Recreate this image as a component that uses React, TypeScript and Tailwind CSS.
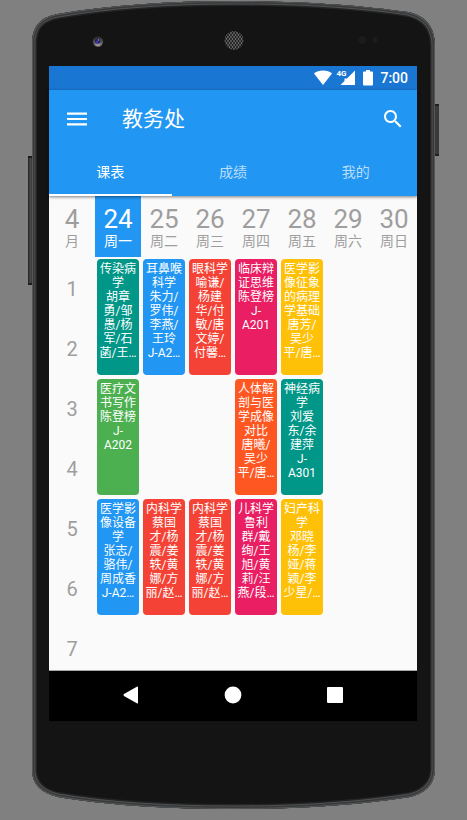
import React, { useState } from "react";

type Lesson = { color: string; lines: string[] };

const TEAL = "bg-[#009688]";
const BLUE = "bg-[#2196f3]";
const RED = "bg-[#f44336]";
const PINK = "bg-[#e91e63]";
const AMBER = "bg-[#ffc107]";
const GREEN = "bg-[#4caf50]";
const ORANGE = "bg-[#ff5722]";

const tabs = ["课表", "成绩", "我的"];

const days = [
  { date: "24", name: "周一" },
  { date: "25", name: "周二" },
  { date: "26", name: "周三" },
  { date: "27", name: "周四" },
  { date: "28", name: "周五" },
  { date: "29", name: "周六" },
  { date: "30", name: "周日" },
];

// One entry for each double period, one slot for each weekday.
const blocks: (Lesson | null)[][] = [
  [
    { color: TEAL, lines: ["传染病", "学", "胡章", "勇/邹", "愚/杨", "军/石", "菡/王…"] },
    { color: BLUE, lines: ["耳鼻喉", "科学", "朱力/", "罗伟/", "李燕/", "王玲", "J-A2…"] },
    { color: RED, lines: ["眼科学", "喻谦/", "杨建", "华/付", "敏/唐", "文婷/", "付馨…"] },
    { color: PINK, lines: ["临床辩", "证思维", "陈登榜", "J-", "A201"] },
    { color: AMBER, lines: ["医学影", "像征象", "的病理", "学基础", "唐芳/", "吴少", "平/唐…"] },
    null,
    null,
  ],
  [
    { color: GREEN, lines: ["医疗文", "书写作", "陈登榜", "J-", "A202"] },
    null,
    null,
    { color: ORANGE, lines: ["人体解", "剖与医", "学成像", "对比", "唐曦/", "吴少", "平/唐…"] },
    { color: TEAL, lines: ["神经病", "学", "刘爱", "东/余", "建萍", "J-", "A301"] },
    null,
    null,
  ],
  [
    { color: BLUE, lines: ["医学影", "像设备", "学", "张志/", "骆伟/", "周成香", "J-A2…"] },
    { color: RED, lines: ["内科学", "蔡国", "才/杨", "震/姜", "轶/黄", "娜/方", "丽/赵…"] },
    { color: RED, lines: ["内科学", "蔡国", "才/杨", "震/姜", "轶/黄", "娜/方", "丽/赵…"] },
    { color: PINK, lines: ["儿科学", "鲁利", "群/戴", "绚/王", "旭/黄", "莉/汪", "燕/段…"] },
    { color: AMBER, lines: ["妇产科", "学", "邓晓", "杨/李", "娅/蒋", "颖/李", "少星/…"] },
    null,
    null,
  ],
];

const BODY =
  "M32 770V44C32 27 40 17 58 14C110 5 170 1 234 1C298 1 360 5 408 12C426 16 435 27 435 46V768C435 784 426 793 410 797C360 805 300 809 234 809C165 809 105 805 58 797C41 793 32 784 32 770Z";

function PhoneBody() {
  return (
    <svg
      className="absolute inset-0 h-full w-full"
      viewBox="0 0 467 820"
      preserveAspectRatio="none"
      aria-hidden="true"
    >
      <defs>
        <linearGradient id="leftKey" x1="0" y1="0" x2="1" y2="0">
          <stop offset="0" stopColor="#222" />
          <stop offset="0.5" stopColor="#4a4a4a" />
          <stop offset="1" stopColor="#2c2c2c" />
        </linearGradient>
        <radialGradient id="lens" cx="0.5" cy="0.8" r="0.8">
          <stop offset="0" stopColor="#a8a4a4" />
          <stop offset="0.5" stopColor="#5c5a60" />
          <stop offset="1" stopColor="#222" />
        </radialGradient>
        <pattern id="mesh" width="3" height="4" patternUnits="userSpaceOnUse">
          <rect width="3" height="4" fill="#6a6a6a" />
          <circle cx="1.5" cy="1" r="1" fill="#161616" />
          <circle cx="0" cy="3" r="1" fill="#161616" />
          <circle cx="3" cy="3" r="1" fill="#161616" />
        </pattern>
        <clipPath id="shell">
          <path d={BODY} />
        </clipPath>
      </defs>
      <rect x="28" y="156" width="5" height="129" fill="url(#leftKey)" />
      <rect x="28" y="156" width="5" height="2" fill="#1c1c1c" />
      <rect x="28" y="283" width="5" height="2" fill="#1c1c1c" />
      <rect x="434" y="104" width="5" height="52" fill="#3a3a3a" />
      <rect x="434" y="104" width="5" height="2" fill="#1f1f1f" />
      <rect x="434" y="154" width="5" height="2" fill="#1f1f1f" />
      <path d={BODY} fill="#141414" />
      <g clipPath="url(#shell)" fill="none">
        <path d={BODY} stroke="#242424" strokeWidth="10" />
        <path d={BODY} stroke="#505152" strokeWidth="7" />
        <path d={BODY} stroke="#38393a" strokeWidth="5" />
        <path d={BODY} stroke="#55585a" strokeWidth="2" />
      </g>
      <circle cx="98" cy="41.5" r="5.2" fill="url(#lens)" />
      <circle cx="97.7" cy="41" r="2.8" fill="#26224e" />
      <circle cx="97" cy="42" r="1.3" fill="#3a36c4" />
      <circle cx="98.5" cy="40" r="0.8" fill="#aaaad0" />
      <circle cx="234" cy="40.5" r="9.5" fill="url(#mesh)" />
      <circle cx="362" cy="40" r="4" fill="#1f1b1c" />
      <circle cx="375" cy="40" r="2.5" fill="#1f1b1c" />
    </svg>
  );
}

function StatusBar() {
  return (
    <div className="flex h-6 items-center justify-end bg-[#1976d2] pr-[9px] text-white">
      <svg className="h-[18px] w-[18px]" viewBox="0 0 18 18" fill="currentColor" aria-hidden="true">
        <path d="M9 16L0 4.600C2 2.600 5.500 1.400 9 1.400S16 2.600 18 4.600Z" />
      </svg>
      <span className="relative ml-1 h-[18px] w-5">
        <svg className="h-[18px] w-5" viewBox="0 0 20 18" fill="currentColor" aria-hidden="true">
          <path d="M19 1.500V16H4.500L8.500 12V9.500H11Z" />
        </svg>
        <span className="absolute top-0 left-0 font-['Roboto',sans-serif] text-[8px] leading-[10px] font-bold">
          4G
        </span>
      </span>
      <svg className="ml-[6px] h-[18px] w-[12px]" viewBox="0 0 12 18" fill="currentColor" aria-hidden="true">
        <path d="M4 1H8V2.500H10Q11 2.500 11 3.500V15.500Q11 16.500 10 16.500H2Q1 16.500 1 15.500V3.500Q1 2.500 2 2.500H4Z" />
      </svg>
      <time className="ml-[6px] text-[14px] leading-6 font-medium">7:00</time>
    </div>
  );
}

function LessonCard({ color, lines }: Lesson) {
  return (
    <div
      className={`mx-auto h-[116px] w-[42px] overflow-hidden rounded-[4px] pt-[3px] text-center text-[12px] leading-[14px] whitespace-nowrap text-white ${color}`}
    >
      {lines.map((line, i) => (
        <span key={i} className="block">
          {line}
        </span>
      ))}
    </div>
  );
}

function Timetable() {
  return (
    <table className="w-full table-fixed border-collapse text-center text-[#9e9e9e]">
      <thead>
        <tr className="h-[61px]">
          {[{ date: "4", name: "月" }, ...days].map((day, i) => (
            <th
              key={day.name}
              scope="col"
              className={`p-0 align-top font-normal ${i === 1 ? "bg-[#2196f3] text-white" : ""}`}
            >
              <span className="block pt-2 text-[26px] leading-[30px]">{day.date}</span>
              <span className="block text-[14px] leading-[14px]">{day.name}</span>
            </th>
          ))}
        </tr>
      </thead>
      <tbody>
        {[1, 2, 3, 4, 5, 6, 7].map((period) => (
          <tr key={period} className="h-[60px]">
            <th scope="row" className="px-0 pt-1 pb-0 text-[20px] leading-6 font-normal">
              {period}
            </th>
            {period % 2 === 1 &&
              blocks[(period - 1) / 2]?.map((lesson, i) => (
                <td key={i} rowSpan={2} className="px-0 py-[2px] align-top">
                  {lesson && <LessonCard {...lesson} />}
                </td>
              ))}
          </tr>
        ))}
      </tbody>
    </table>
  );
}

export default function App() {
  const [active, setActive] = useState(0);
  return (
    <div className="relative min-h-screen bg-[#808080] pt-[66px] pr-[50px] pb-[99px] pl-[49px] font-['Roboto','Noto_Sans_CJK_SC',sans-serif]">
      <PhoneBody />
      <main className="relative">
        <StatusBar />
        <header className="relative z-10 bg-[#2196f3] text-white shadow-[0_1px_3px_rgba(0,0,0,0.5)]">
          <div className="flex h-14 items-center pt-[2px] pr-3 pl-4">
            <button type="button" aria-label="菜单" className="h-6 w-6">
              <svg viewBox="0 0 24 24" fill="currentColor" className="h-6 w-6">
                <path d="M2 18.500H22V16.300H2ZM2 13.100H22V10.900H2ZM2 5.500V7.700H22V5.500Z" />
              </svg>
            </button>
            <h1 className="ml-[33px] flex-1 text-[21px] leading-7">教务处</h1>
            <button type="button" aria-label="搜索" className="h-6 w-6">
              <svg viewBox="0 0 24 24" fill="currentColor" className="h-6 w-6">
                <path d="M15.500 14h-.790l-.280-.270C15.410 12.590 16 11.110 16 9.500 16 5.910 13.090 3 9.500 3S3 5.910 3 9.500 5.910 16 9.500 16c1.610 0 3.090-.590 4.230-1.570l.270.280v.790l5 4.990L20.490 19l-4.990-5zm-6 0C7.010 14 5 11.990 5 9.500S7.010 5 9.500 5 14 7.010 14 9.500 11.990 14 9.500 14z" />
              </svg>
            </button>
          </div>
          <div role="tablist" className="grid grid-cols-3">
            {tabs.map((tab, i) => (
              <button
                key={tab}
                type="button"
                role="tab"
                aria-selected={i === active}
                onClick={() => setActive(i)}
                className={`h-[50px] border-b-2 pt-1 text-[14px] leading-5 ${
                  i === active ? "border-white text-white" : "border-transparent text-white/70"
                }`}
              >
                {tab}
              </button>
            ))}
          </div>
        </header>
        <div className="h-[475px] overflow-hidden border-b border-[#a8a8a8] bg-[#fafafa]">
          <Timetable />
        </div>
        <nav className="flex h-[50px] items-center justify-center gap-[78px] bg-black pb-[2px] text-white">
          <button type="button" aria-label="返回" className="h-6 w-6">
            <svg viewBox="0 0 24 24" fill="currentColor" className="h-6 w-6">
              <path d="M19 4.500V19.500Q19 20.800 17.800 20.200L5 13Q3.800 12 5 11L17.800 3.800Q19 3.200 19 4.500Z" />
            </svg>
          </button>
          <button type="button" aria-label="主屏幕" className="h-6 w-6">
            <svg viewBox="0 0 24 24" fill="currentColor" className="h-6 w-6">
              <circle cx="12" cy="12" r="8.400" />
            </svg>
          </button>
          <button type="button" aria-label="最近任务" className="h-6 w-6">
            <svg viewBox="0 0 24 24" fill="currentColor" className="h-6 w-6">
              <rect x="4" y="4" width="16" height="16" rx="1" />
            </svg>
          </button>
        </nav>
      </main>
    </div>
  );
}
